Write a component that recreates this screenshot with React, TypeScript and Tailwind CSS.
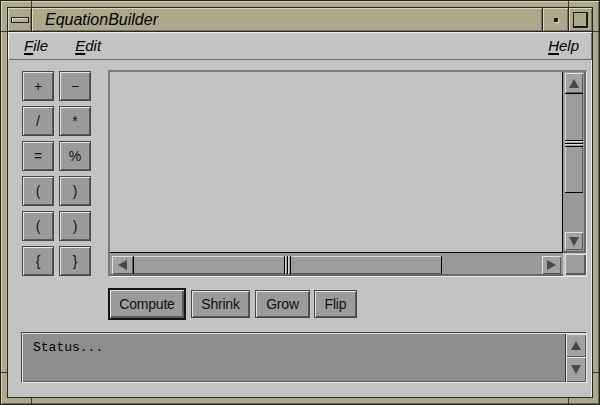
import React from "react";

const keys = [
  ["+", "−"],
  ["/", "*"],
  ["=", "%"],
  ["(", ")"],
  ["(", ")"],
  ["{", "}"],
];

type Dir = "up" | "down" | "left" | "right";

function Arrow({ dir }: { dir: Dir }) {
  const vertical = dir === "up" || dir === "down";
  const w = vertical ? 10 : 9;
  const h = vertical ? 9 : 10;
  const pts = {
    up: "5,0 10,9 0,9",
    down: "0,0 10,0 5,9",
    left: "0,5 9,0 9,10",
    right: "0,0 9,5 0,10",
  }[dir];
  return (
    <svg width={w} height={h} viewBox={`0 0 ${w} ${h}`}>
      <polygon points={pts} fill="#484848" />
    </svg>
  );
}

function ArrowBtn({ dir, className }: { dir: Dir; className: string }) {
  return (
    <div
      className={`${className} flex items-center justify-center bg-[#a2a2a2] shadow-[inset_1px_1px_0_#e2e2e2,inset_-1px_-1px_0_#585858]`}
    >
      <Arrow dir={dir} />
    </div>
  );
}

// little resize marks cut into the frame
function Notch({ className }: { className: string }) {
  return <div className={`absolute bg-[#3a3830] ${className}`} />;
}

const App = () => {
  return (
    <div className="relative w-[600px] h-[405px] bg-[#ada88c] border border-[#22221c] p-[6px] shadow-[inset_1px_1px_0_#d8d4bb,inset_-1px_-1px_0_#6e6a56] font-['Liberation_Sans',Arial,sans-serif] text-[#111] overflow-hidden">
      <Notch className="left-[30px] top-0 w-[1px] h-[6px]" />
      <Notch className="left-[567px] top-0 w-[1px] h-[6px]" />
      <Notch className="left-0 top-[30px] w-[6px] h-[1px]" />
      <Notch className="right-0 top-[30px] w-[6px] h-[1px]" />
      <Notch className="left-0 top-[371px] w-[6px] h-[1px]" />
      <Notch className="right-0 top-[371px] w-[6px] h-[1px]" />
      <Notch className="left-[30px] bottom-0 w-[1px] h-[6px]" />
      <Notch className="left-[567px] bottom-0 w-[1px] h-[6px]" />

      <div className="w-full h-full border border-[#262626] flex flex-col">
        {/* Title bar */}
        <div className="flex h-[24px] border-b border-[#262626] bg-[#ada88c]">
          <div className="w-[24px] border-r border-[#262626] shadow-[inset_1px_1px_0_#dcd8c0,inset_-1px_-1px_0_#77735e] flex items-center justify-center">
            <div className="w-[18px] h-[6px] border border-[#1c1c1c] bg-[#b4af93] shadow-[inset_1px_1px_0_#e4e0c8]" />
          </div>
          <div className="flex-1 border-r border-[#262626] shadow-[inset_1px_1px_0_#dcd8c0,inset_-1px_-1px_0_#77735e] flex items-center pl-[13px] italic text-[16px] text-black">
            EquationBuilder
          </div>
          <div className="w-[26px] border-r border-[#262626] shadow-[inset_1px_1px_0_#dcd8c0,inset_-1px_-1px_0_#77735e] flex items-center justify-center">
            <div className="w-[4px] h-[4px] bg-[#1c1c1c] shadow-[1px_1px_0_#e4e0c8]" />
          </div>
          <div className="w-[23px] shadow-[inset_1px_1px_0_#dcd8c0,inset_-1px_-1px_0_#77735e] flex items-center justify-center">
            <div className="w-[15px] h-[16px] border-t border-l border-r-2 border-b-2 border-[#1c1c1c]" />
          </div>
        </div>

        {/* Menu bar */}
        <div className="h-[28px] bg-[#c3c3c3] shadow-[inset_1px_1px_0_#f0f0f0,inset_-1px_-1px_0_#6c6c6c] flex items-center italic text-[15px] text-black pl-[16px] pr-[13px]">
          <span>
            <span className="underline decoration-2 underline-offset-[2px]">F</span>ile
          </span>
          <span className="ml-[27px]">
            <span className="underline decoration-2 underline-offset-[2px]">E</span>dit
          </span>
          <span className="ml-auto">
            <span className="underline decoration-2 underline-offset-[2px]">H</span>elp
          </span>
        </div>

        {/* Client */}
        <div className="flex-1 bg-[#c3c3c3] pt-[10px] pl-[14px] shadow-[inset_-1px_0_0_#ececec]">
          <div className="flex">
            <div className="mt-[1px] grid grid-cols-[32px_32px] gap-[5px] self-start">
              {keys.flat().map((k, i) => (
                <button
                  key={i}
                  className="w-[32px] h-[30px] border border-[#464646] bg-[#9b9b9b] shadow-[inset_1px_1px_0_#e4e4e4,inset_-1px_-1px_0_#5a5a5a] flex items-center justify-center text-[14px] text-[#111]"
                >
                  {k}
                </button>
              ))}
            </div>

            {/* Scrolled text area */}
            <div className="ml-[17px] w-[479px] h-[207px] border-t-2 border-l-2 border-r border-b border-t-[#7a7a7a] border-l-[#7a7a7a] border-r-[#ececec] border-b-[#ececec] grid grid-cols-[453px_23px] grid-rows-[181px_23px]">
              <div className="bg-[#c3c3c3] border-r border-b border-black" />

              <div className="flex flex-col pl-[2px] pt-[1px] bg-[#9a9a9a] shadow-[inset_-2px_-2px_0_#686868]">
                <ArrowBtn dir="up" className="w-[18px] h-[20px]" />
                <div className="w-[18px] h-[100px] border-t border-b border-black bg-[#9c9c9c] shadow-[inset_1px_0_0_#d8d8d8,inset_-1px_0_0_#5e5e5e] flex flex-col justify-center">
                  <div className="h-[1px] bg-black" />
                  <div className="h-[1px] bg-[#dcdcdc]" />
                  <div className="h-[1px]" />
                  <div className="h-[1px] bg-black" />
                  <div className="h-[1px] bg-[#dcdcdc]" />
                  <div className="h-[1px]" />
                  <div className="h-[1px] bg-black" />
                </div>
                <div className="w-[18px] h-[39px]" />
                <ArrowBtn dir="down" className="w-[18px] h-[18px]" />
              </div>

              <div className="flex items-start pl-[2px] pt-[3px] bg-[#9a9a9a] shadow-[inset_0_-2px_0_#686868]">
                <ArrowBtn dir="left" className="w-[21px] h-[18px]" />
                <div className="w-[309px] h-[18px] border-l border-r border-black bg-[#9c9c9c] shadow-[inset_0_1px_0_#d8d8d8,inset_0_-1px_0_#5e5e5e] flex justify-center">
                  <div className="w-[1px] bg-black" />
                  <div className="w-[1px] bg-[#dcdcdc]" />
                  <div className="w-[1px]" />
                  <div className="w-[1px] bg-black" />
                  <div className="w-[1px] bg-[#dcdcdc]" />
                  <div className="w-[1px]" />
                  <div className="w-[1px] bg-black" />
                </div>
                <div className="w-[100px] h-[18px]" />
                <ArrowBtn dir="right" className="w-[19px] h-[18px]" />
              </div>

              <div className="flex items-start pl-[2px] pt-[1px] bg-[#c3c3c3]">
                <div className="w-[21px] h-[21px] bg-[#9c9c9c] shadow-[inset_1px_1px_0_#e2e2e2,inset_-2px_-2px_0_#5a5a5a]" />
              </div>
            </div>
          </div>

          {/* Action buttons */}
          <div className="ml-[86px] mt-[11px] h-[32px] flex items-center text-[14px] tracking-[-0.2px] text-[#111]">
            <button className="w-[78px] h-[32px] border-2 border-[#151515] bg-[#9b9b9b] shadow-[inset_1px_1px_0_#e4e4e4,inset_-2px_-2px_0_#5a5a5a]">
              Compute
            </button>
            <button className="ml-[5px] w-[59px] h-[28px] border border-[#464646] bg-[#9b9b9b] shadow-[inset_1px_1px_0_#e4e4e4,inset_-1px_-1px_0_#5a5a5a]">
              Shrink
            </button>
            <button className="ml-[5px] w-[55px] h-[28px] border border-[#464646] bg-[#9b9b9b] shadow-[inset_1px_1px_0_#e4e4e4,inset_-1px_-1px_0_#5a5a5a]">
              Grow
            </button>
            <button className="ml-[4px] w-[43px] h-[28px] border border-[#464646] bg-[#9b9b9b] shadow-[inset_1px_1px_0_#e4e4e4,inset_-1px_-1px_0_#5a5a5a]">
              Flip
            </button>
          </div>

          {/* Status */}
          <div className="ml-[-1px] mt-[12px] w-[566px] h-[51px] border border-t-[#4a4a4a] border-l-[#4a4a4a] border-r-[#ececec] border-b-[#ececec] shadow-[inset_1px_1px_0_#dedede] flex pl-[1px] pt-[1px]">
            <div className="flex-1 bg-[#8e8e8e] border-r border-[#3a3a3a] shadow-[inset_0_-1px_0_#5a5a5a] pl-[10px] pt-[6px] font-['Liberation_Mono',monospace] text-[13px] leading-[16px] text-black">
              Status...
            </div>
            <div className="w-[20px] flex flex-col">
              <ArrowBtn dir="up" className="w-[20px] h-[23px]" />
              <ArrowBtn dir="down" className="w-[20px] flex-1" />
            </div>
          </div>
        </div>
      </div>
    </div>
  );
};

export default App;
